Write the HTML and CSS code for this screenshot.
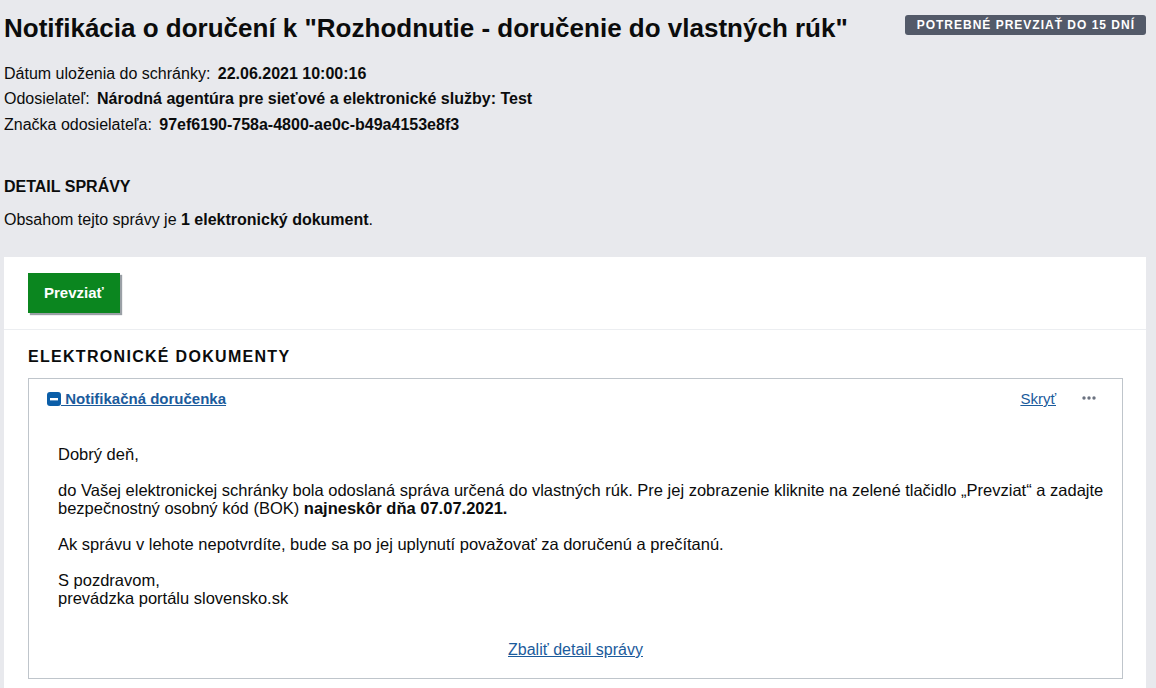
FILE: index.html
```html
<!DOCTYPE html>
<html lang="sk">
<head>
	<meta charset="utf-8">
	<title>Notifikácia o doručení</title>
	<link rel="stylesheet" href="styles.css">
</head>
<body>
	<main class="page">
		<!-- hlavicka spravy -->
		<header class="msg-head">
			<h1 class="msg-title">Notifikácia o doručení k "Rozhodnutie - doručenie do vlastných rúk"</h1>
			<span class="badge">Potrebné prevziať do 15 dní</span>
		</header>

		<ul class="meta">
			<li>Dátum uloženia do schránky: <b>22.06.2021 10:00:16</b></li>
			<li>Odosielateľ: <b>Národná agentúra pre sieťové a elektronické služby: Test</b></li>
			<li>Značka odosielateľa: <b>97ef6190-758a-4800-ae0c-b49a4153e8f3</b></li>
		</ul>

		<h2 class="section-title">DETAIL SPRÁVY</h2>
		<p class="summary">Obsahom tejto správy je <b>1 elektronický dokument</b>.</p>

		<!-- karta s dokumentmi -->
		<section class="card">
			<div class="card-actions">
				<button class="btn-green">Prevziať</button>
			</div>
			<div class="card-body">
				<h2 class="section-title docs-title">ELEKTRONICKÉ DOKUMENTY</h2>
				<div class="doc">
					<div class="doc-head">
						<a class="doc-name" href="#">
							<svg class="doc-icon" width="14" height="14" viewBox="0 0 14 14"><rect x="0" y="0" width="14" height="14" rx="3" fill="#0b5ea8"/><rect x="3" y="6" width="8" height="2.4" fill="#fff"/></svg>
							Notifikačná doručenka</a>
						<div class="doc-tools">
							<a class="link" href="#">Skryť</a>
							<svg class="more" width="14" height="4" viewBox="0 0 14 4"><circle cx="2" cy="2" r="1.7" fill="#6b7280"/><circle cx="7" cy="2" r="1.7" fill="#6b7280"/><circle cx="12" cy="2" r="1.7" fill="#6b7280"/></svg>
						</div>
					</div>
					<div class="doc-text">
						<p>Dobrý deň,</p>
						<p>do Vašej elektronickej schránky bola odoslaná správa určená do vlastných rúk. Pre jej zobrazenie kliknite na zelené tlačidlo „Prevziat“ a zadajte bezpečnostný osobný kód (BOK) <b>najneskôr dňa 07.07.2021.</b></p>
						<p>Ak správu v lehote nepotvrdíte, bude sa po jej uplynutí považovať za doručenú a prečítanú.</p>
						<p>S pozdravom,<br>prevádzka portálu slovensko.sk</p>
					</div>
					<div class="doc-foot">
						<a class="link" href="#">Zbaliť detail správy</a>
					</div>
				</div>
			</div>
		</section>
	</main>
</body>
</html>
```

FILE: styles.css
```css
body {
	margin: 0;
	background-color: #e8e9ed;
	color: #0b0c0c;
	font-family: "Liberation Sans", Arial, sans-serif;
	font-size: 16px;
}
.page {
	padding: 0 10px 0 4px;
}
.msg-head {
	display: flex;
	justify-content: space-between;
	align-items: flex-start;
	padding-top: 13px;
}
.msg-title {
	margin: 0;
	font-size: 26px;
	line-height: 30px;
}
.badge {
	margin-top: 2px;
	padding: 3px 11px 3px 12px;
	border-radius: 3px;
	background-color: #535a69;
	color: #fff;
	font-size: 12px;
	font-weight: bold;
	letter-spacing: 1px;
	text-transform: uppercase;
	line-height: 14px;
}
.meta {
	list-style: none;
	margin: 18px 0 0;
	padding: 0;
}
.meta li {
	line-height: 25.3px;
}
.meta b {
	margin-left: 3px;
}
.section-title {
	margin: 40.5px 0 0;
	font-size: 16px;
	line-height: 20px;
}
.summary {
	margin: 13px 0 0;
	line-height: 20px;
}
.card {
	margin-top: 26.5px;
	background-color: #fff;
	padding-bottom: 30px;
}
.card-actions {
	padding: 16px 24px 16px;
	border-bottom: 1px solid #eceef1;
}
.btn-green {
	height: 40px;
	padding: 0 16px;
	border: 0;
	border-radius: 0;
	background-color: #0b861f;
	box-shadow: 2px 2px 1px #9aa0a6;
	color: #fff;
	font-family: inherit;
	font-size: 15px;
	font-weight: bold;
}
.card-body {
	padding: 17px 23px 0 24px;
}
.docs-title {
	margin: 0 0 11px;
	letter-spacing: 1.3px;
}
.doc {
	border: 1px solid #bfc5cb;
}
.doc-head {
	display: flex;
	justify-content: space-between;
	align-items: center;
	padding: 11px 26px 0 18px;
	font-size: 15px;
}
.doc-name {
	color: #1b5b9c;
	font-weight: bold;
	text-decoration: underline;
}
.doc-icon {
	vertical-align: -2px;
}
.doc-tools {
	display: flex;
	align-items: center;
	gap: 26px;
}
.link {
	color: #1b5b9c;
	text-decoration: underline;
}
.doc-text {
	padding: 38px 10px 0 29px;
	font-size: 16.5px;
	line-height: 18px;
}
.doc-text p {
	margin: 0 0 18px;
}
.doc-foot {
	padding: 16px 0 19px;
	text-align: center;
}
```
